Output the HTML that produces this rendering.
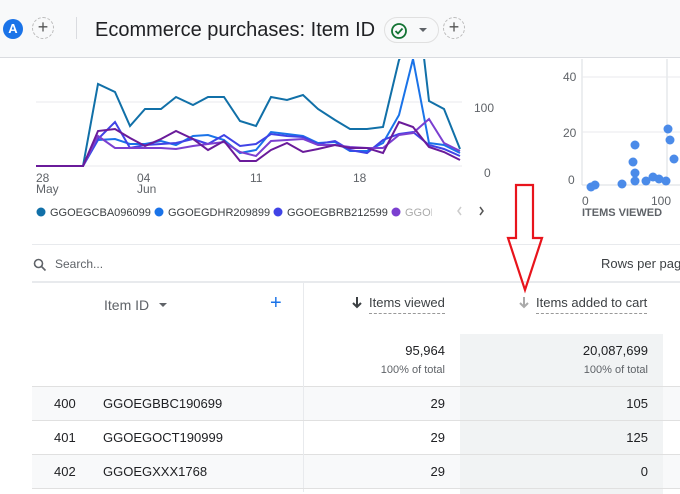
<!DOCTYPE html>
<html><head><meta charset="utf-8"><style>
*{margin:0;padding:0;box-sizing:border-box}
body{width:680px;height:492px;overflow:hidden;background:#fff;font-family:"Liberation Sans",Arial,sans-serif;position:relative;color:#202124}
.abs{position:absolute}
.hdr{left:0;top:0;width:680px;height:58px;background:#f8f9fa;border-bottom:1px solid #dadce0}
.t{font-size:12px;color:#5f6368}
.num{position:absolute;font-size:13px;text-align:right}
</style></head><body>
<div class="abs hdr"></div>
<div class="abs" style="left:3px;top:19px;width:20px;height:20px;border-radius:50%;background:#1a73e8;color:#fff;font-size:13px;font-weight:bold;text-align:center;line-height:20px">A</div>
<div class="abs" style="left:32px;top:17px;width:22px;height:22px;border-radius:50%;border:1px dashed #bbb;text-align:center;line-height:19px;font-size:18px;color:#555">+</div>
<div class="abs" style="left:76px;top:17px;width:1px;height:22px;background:#dadce0"></div>
<div class="abs" style="left:95px;top:19px;font-size:20px;color:#202124">Ecommerce purchases: Item ID</div>
<div class="abs" style="left:384px;top:17px;width:55px;height:26px;border:1px solid #e0e0e0;border-radius:13px;background:#f8f9fa"></div>
<svg class="abs" style="left:390px;top:22px" width="18" height="18"><circle cx="9" cy="9" r="7" fill="none" stroke="#137333" stroke-width="1.8"/><path d="M5.5 9l2.5 2.5 4.5-5" fill="none" stroke="#137333" stroke-width="1.8"/></svg>
<div class="abs" style="left:419px;top:28px;border:4px solid transparent;border-top:4px solid #5f6368"></div>
<div class="abs" style="left:443px;top:17px;width:22px;height:22px;border-radius:50%;border:1px dashed #bbb;text-align:center;line-height:19px;font-size:18px;color:#555">+</div>

<svg class="abs" style="left:0;top:59px" width="680" height="185">
<line x1="36" y1="43" x2="462" y2="43" stroke="#e8eaed"/>
<line x1="36" y1="107" x2="462" y2="107" stroke="#e8eaed"/>
<g fill="none" stroke-width="2">
<polyline stroke="#1170a8" points="36,107 83,107 98,25 115,33 130,67 145,50 161,50 176,38 193,46 208,38 224,38 240,62 256,67 271,38 287,41 303,36 318,50 335,61 350,70 367,70 383,68 399,1 405,-10 423,-10 429,42 444,50 460,90"/>
<polyline stroke="#1a73e8" points="36,107 83,107 98,81 115,80 130,85 145,85 161,82 176,86 193,77 208,76 224,81 240,94 256,91 271,73 287,75 303,77 318,84 335,83 350,92 367,92 383,84 399,56 413,0 429,84 444,86 460,94"/>
<polyline stroke="#4043e6" points="36,107 83,107 98,80 115,63 130,89 145,86 161,85 176,84 193,80 208,85 224,76 240,87 256,85 271,75 287,77 303,78 318,85 335,82 350,91 367,94 383,81 399,75 413,73 429,86 444,90 460,97"/>
<polyline stroke="#7b3fd0" points="36,107 83,107 98,77 115,89 130,89 145,89 161,89 176,90 193,87 208,85 224,83 240,93 256,97 271,82 287,81 303,80 318,86 335,86 350,88 367,89 383,89 399,76 413,74 429,60 444,84 460,92"/>
<polyline stroke="#6a1b9a" points="36,107 83,107 98,72 115,70 130,79 145,87 161,80 176,72 193,80 208,91 224,82 240,102 256,102 271,91 287,84 303,93 318,90 335,86 350,89 367,89 383,94 399,63 413,68 429,88 444,93 460,101"/>
</g>
<text x="474" y="53" font-size="12" fill="#5f6368" font-family="Liberation Sans">100</text>
<text x="484" y="118" font-size="12" fill="#5f6368" font-family="Liberation Sans">0</text>
<text x="36" y="123" font-size="12" fill="#5f6368" font-family="Liberation Sans">28</text>
<text x="36" y="134" font-size="12" fill="#5f6368" font-family="Liberation Sans">May</text>
<text x="137" y="123" font-size="12" fill="#5f6368" font-family="Liberation Sans">04</text>
<text x="137" y="134" font-size="12" fill="#5f6368" font-family="Liberation Sans">Jun</text>
<text x="250" y="123" font-size="12" fill="#5f6368" font-family="Liberation Sans">11</text>
<text x="353" y="123" font-size="12" fill="#5f6368" font-family="Liberation Sans">18</text>
<g font-size="11" fill="#3c4043" font-family="Liberation Sans">
<circle cx="41" cy="153" r="4.5" fill="#1170a8"/><text x="50" y="157">GGOEGCBA096099</text>
<circle cx="159" cy="153" r="4.5" fill="#1a73e8"/><text x="168" y="157">GGOEGDHR209899</text>
<circle cx="278" cy="153" r="4.5" fill="#4043e6"/><text x="287" y="157">GGOEGBRB212599</text>
<circle cx="396" cy="153" r="4.5" fill="#7b3fd0"/><text x="405" y="157" fill="#aaa">GGOE</text>
</g>
<rect x="432" y="143" width="30" height="20" fill="#fff"/>
<path d="M461 148l-3 4 3 4" fill="none" stroke="#ccc" stroke-width="1.5"/>
<path d="M480 148l3 4-3 4" fill="none" stroke="#555" stroke-width="1.5"/>
<line x1="582" y1="0" x2="582" y2="126" stroke="#dadce0"/>
<line x1="667" y1="0" x2="667" y2="126" stroke="#dadce0"/>
<line x1="582" y1="18" x2="680" y2="18" stroke="#e8eaed"/>
<line x1="582" y1="73" x2="680" y2="73" stroke="#e8eaed"/>
<line x1="582" y1="126" x2="680" y2="126" stroke="#dadce0"/>
<g font-size="12" fill="#5f6368" font-family="Liberation Sans"><text x="563" y="22">40</text><text x="563" y="78">20</text><text x="568" y="125">0</text><text x="582" y="146">0</text><text x="651" y="146">100</text></g>
<text x="582" y="157" font-size="11" font-weight="bold" fill="#5f6368" font-family="Liberation Sans">ITEMS VIEWED</text>
<g fill="#4285e8" opacity=".95"><circle cx="591" cy="128" r="4.5"/><circle cx="595" cy="126" r="4.5"/><circle cx="622" cy="125" r="4.5"/><circle cx="635" cy="86" r="4.5"/><circle cx="633" cy="103" r="4.5"/><circle cx="635" cy="114" r="4.5"/><circle cx="635" cy="122" r="4.5"/><circle cx="646" cy="122" r="4.5"/><circle cx="653" cy="118" r="4.5"/><circle cx="659" cy="120" r="4.5"/><circle cx="666" cy="122" r="4.5"/><circle cx="668" cy="70" r="4.5"/><circle cx="670" cy="81" r="4.5"/><circle cx="674" cy="100" r="4.5"/></g>
</svg>

<div class="abs" style="left:32px;top:244px;width:648px;height:1px;background:#e8eaed"></div>
<svg class="abs" style="left:33px;top:258px" width="14" height="14"><circle cx="5.5" cy="5.5" r="4" fill="none" stroke="#5f6368" stroke-width="1.6"/><path d="M8.5 8.5l4 4" stroke="#5f6368" stroke-width="1.6"/></svg>
<div class="abs t" style="left:55px;top:257px">Search...</div>
<div class="abs" style="left:601px;top:256px;font-size:13px;color:#3c4043;white-space:nowrap">Rows per page</div>
<div class="abs" style="left:32px;top:281px;width:648px;height:2px;background:#e8eaed"></div>
<div class="abs" style="left:460px;top:334px;width:203px;height:160px;background:#f1f3f4"></div>
<div class="abs" style="left:303px;top:283px;width:1px;height:209px;background:#e8eaed"></div>
<div class="abs" style="left:104px;top:297px;font-size:14px;color:#5f6368">Item ID</div>
<div class="abs" style="left:159px;top:303px;border:4px solid transparent;border-top:4px solid #5f6368"></div>
<div class="abs" style="left:270px;top:292px;font-size:20px;color:#1a73e8">+</div>
<svg class="abs" style="left:351px;top:296px" width="12" height="14"><path d="M6 1v10M2 7l4 4 4-4" fill="none" stroke="#3c4043" stroke-width="2"/></svg>
<div class="abs" style="left:369px;top:295px;font-size:13px;color:#3c4043;border-bottom:1px dashed #999;padding-bottom:3px">Items viewed</div>
<svg class="abs" style="left:518px;top:296px" width="12" height="14"><path d="M6 1v10M2 7l4 4 4-4" fill="none" stroke="#aaa" stroke-width="2"/></svg>
<div class="abs" style="left:536px;top:295px;font-size:13px;color:#3c4043;border-bottom:1px dashed #999;padding-bottom:3px">Items added to cart</div>
<div class="num" style="right:235px;top:343px">95,964</div>
<div class="num" style="right:235px;top:364px;font-size:11px;color:#5f6368">100% of total</div>
<div class="num" style="right:32px;top:343px">20,087,699</div>
<div class="num" style="right:32px;top:364px;font-size:11px;color:#5f6368">100% of total</div>

<div class="abs" style="left:32px;top:386px;width:271px;height:34px;background:#f8f9fa;border-top:1px solid #e0e0e0"></div>
<div class="abs" style="left:304px;top:386px;width:156px;height:34px;background:#f8f9fa;border-top:1px solid #e0e0e0"></div>
<div class="abs" style="left:460px;top:386px;width:203px;height:1px;background:#e0e0e0"></div>
<div class="abs" style="left:663px;top:386px;width:17px;height:34px;background:#f8f9fa;border-top:1px solid #e0e0e0"></div>
<div class="abs" style="left:32px;top:420px;width:648px;height:1px;background:#e0e0e0"></div>
<div class="abs" style="left:32px;top:454px;width:271px;height:34px;background:#f8f9fa;border-top:1px solid #e0e0e0"></div>
<div class="abs" style="left:304px;top:454px;width:156px;height:34px;background:#f8f9fa;border-top:1px solid #e0e0e0"></div>
<div class="abs" style="left:460px;top:454px;width:203px;height:1px;background:#e0e0e0"></div>
<div class="abs" style="left:663px;top:454px;width:17px;height:34px;background:#f8f9fa;border-top:1px solid #e0e0e0"></div>
<div class="abs" style="left:32px;top:488px;width:648px;height:1px;background:#e0e0e0"></div>

<div class="abs" style="left:54px;top:396px;font-size:13px">400</div>
<div class="abs" style="left:103px;top:396px;font-size:13px">GGOEGBBC190699</div>
<div class="num" style="right:235px;top:396px">29</div>
<div class="num" style="right:32px;top:396px">105</div>
<div class="abs" style="left:54px;top:430px;font-size:13px">401</div>
<div class="abs" style="left:103px;top:430px;font-size:13px">GGOEGOCT190999</div>
<div class="num" style="right:235px;top:430px">29</div>
<div class="num" style="right:32px;top:430px">125</div>
<div class="abs" style="left:54px;top:464px;font-size:13px">402</div>
<div class="abs" style="left:103px;top:464px;font-size:13px">GGOEGXXX1768</div>
<div class="num" style="right:235px;top:464px">29</div>
<div class="num" style="right:32px;top:464px">0</div>

<svg class="abs" style="left:500px;top:180px" width="50" height="120"><path d="M16 5H33V58H42L25 110L8 58H16Z" fill="none" stroke="#e8141c" stroke-width="2.2"/></svg>
</body></html>
